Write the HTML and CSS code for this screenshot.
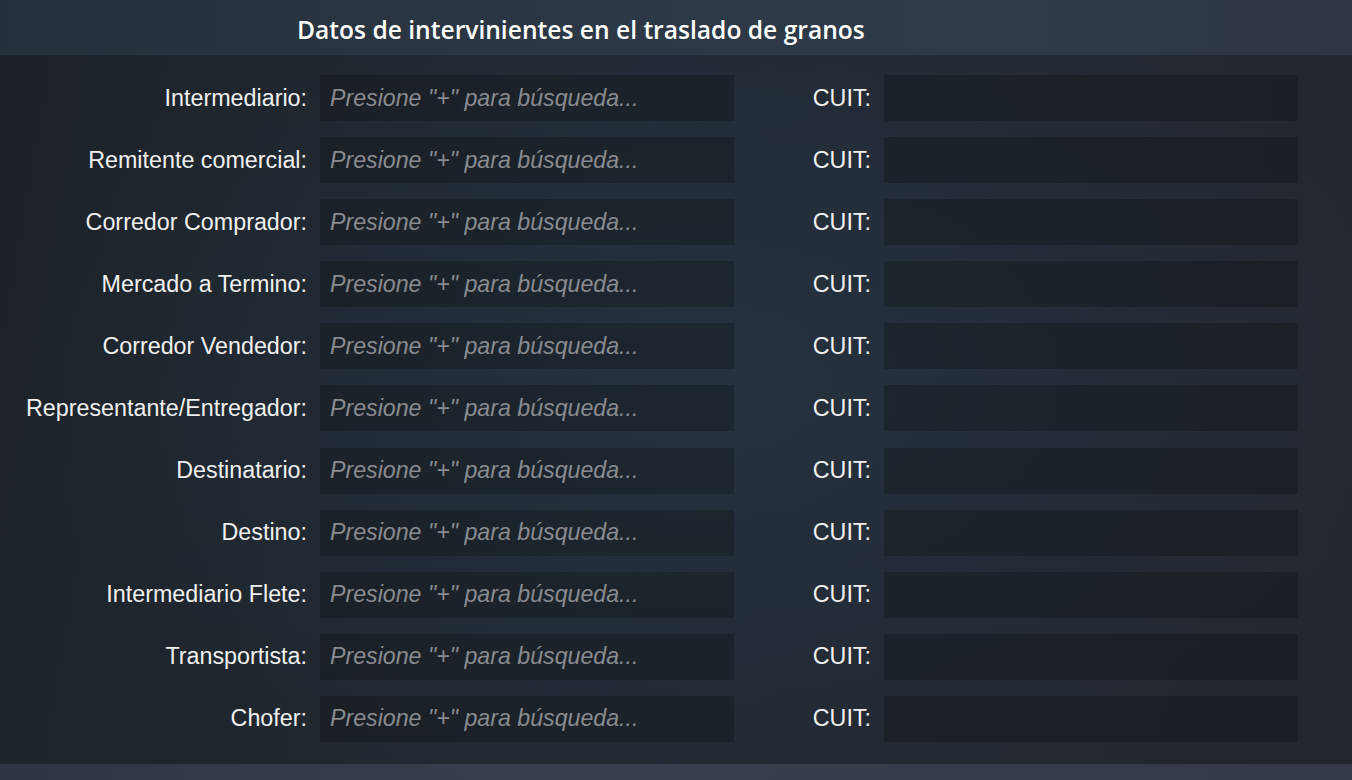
FILE: index.html
```html
<!DOCTYPE html>
<html>
<head>
    <title>Intervinientes</title>
    <link rel="stylesheet" href="styles.css">
</head>
<body>
    <div class="header">
        <h1>Datos de intervinientes en el traslado de granos</h1>
    </div>

    <form class="form">
        <label>Intermediario:</label>
        <input type="text" placeholder='Presione "+" para búsqueda...' />
        <label>CUIT:</label>
        <input type="text" />

        <label>Remitente comercial:</label>
        <input type="text" placeholder='Presione "+" para búsqueda...' />
        <label>CUIT:</label>
        <input type="text" />

        <label>Corredor Comprador:</label>
        <input type="text" placeholder='Presione "+" para búsqueda...' />
        <label>CUIT:</label>
        <input type="text" />

        <label>Mercado a Termino:</label>
        <input type="text" placeholder='Presione "+" para búsqueda...' />
        <label>CUIT:</label>
        <input type="text" />

        <label>Corredor Vendedor:</label>
        <input type="text" placeholder='Presione "+" para búsqueda...' />
        <label>CUIT:</label>
        <input type="text" />

        <label>Representante/Entregador:</label>
        <input type="text" placeholder='Presione "+" para búsqueda...' />
        <label>CUIT:</label>
        <input type="text" />

        <label>Destinatario:</label>
        <input type="text" placeholder='Presione "+" para búsqueda...' />
        <label>CUIT:</label>
        <input type="text" />

        <label>Destino:</label>
        <input type="text" placeholder='Presione "+" para búsqueda...' />
        <label>CUIT:</label>
        <input type="text" />

        <label>Intermediario Flete:</label>
        <input type="text" placeholder='Presione "+" para búsqueda...' />
        <label>CUIT:</label>
        <input type="text" />

        <label>Transportista:</label>
        <input type="text" placeholder='Presione "+" para búsqueda...' />
        <label>CUIT:</label>
        <input type="text" />

        <label>Chofer:</label>
        <input type="text" placeholder='Presione "+" para búsqueda...' />
        <label>CUIT:</label>
        <input type="text" />
    </form>

    <div class="footer"></div>
</body>
</html>
```

FILE: styles.css
```css
html, body {
    margin: 0;
    height: 780px;
    overflow: hidden;
}
body {
    font-family: "Liberation Sans", Arial, sans-serif;
    color: #f2f2f2;
    background:
        radial-gradient(ellipse 700px 420px at 720px 380px, rgba(40, 56, 72, 0.55), rgba(40, 56, 72, 0) 100%),
        linear-gradient(100deg, #1c2228 0%, #222a33 45%, #23272f 100%);
    display: flex;
    flex-direction: column;
}
.header {
    height: 55px;
    background: linear-gradient(90deg, #25303a 0%, #2c3845 45%, #2f3a48 70%, #2f3643 100%);
    padding-left: 297px;
    box-sizing: border-box;
}
h1 {
    margin: 0;
    font-family: "Open Sans", sans-serif;
    font-weight: 600;
    font-size: 24.6px;
    line-height: 59px;
    color: #ffffff;
}
.form {
    flex: 1;
    display: grid;
    grid-template-columns: 307px 414px 124px 414px;
    grid-auto-rows: 46px;
    column-gap: 13px;
    row-gap: 16.1px;
    padding-top: 20px;
    align-content: start;
}
.form label {
    font-size: 23.3px;
    text-align: right;
    align-self: center;
    white-space: nowrap;
    color: #f0f0f0;
}
.form input {
    border: none;
    outline: none;
    margin: 0;
    padding: 0 10px;
    background: rgba(14, 16, 20, 0.35);
    font-family: "Liberation Sans", Arial, sans-serif;
    font-size: 23.2px;
    color: #e0e0e0;
}
.form input::placeholder {
    color: #888b90;
    font-style: italic;
}
.footer {
    height: 16px;
    background: linear-gradient(90deg, #2f3540 0%, #37404c 40%, #343a47 100%);
}
```
